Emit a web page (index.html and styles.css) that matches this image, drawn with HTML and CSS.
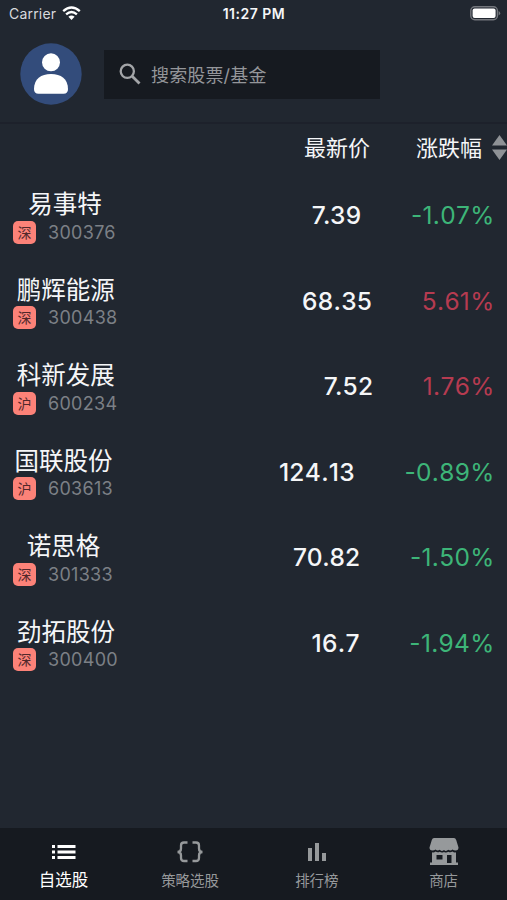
FILE: index.html
```html
<!DOCTYPE html>
<html lang="zh-CN">
<head>
<meta charset="utf-8">
<title>自选股</title>
<link rel="stylesheet" href="styles.css">
</head>
<body>
<div class="app">
  <div class="status">
    <div class="carrier"><span>Carrier</span>
      <svg width="19" height="15" viewBox="0 0 19 15" fill="none" stroke="#fff" stroke-width="2.4"><path d="M1.2 5.2Q9.5-2 17.8 5.2"/><path d="M4.1 8.4Q9.5 3.8 14.9 8.4"/><path d="M6.4 10.8Q9.5 8.3 12.6 10.8L9.5 14Z" fill="#fff" stroke="none"/></svg>
    </div>
    <div class="time">11:27 PM</div>
    <svg class="battery" width="31" height="15" viewBox="0 0 31 15"><rect x=".8" y=".8" width="26.6" height="13" rx="4" fill="none" stroke="#74777d" stroke-width="1.4"/><rect x="2.6" y="2.6" width="23" height="9.4" rx="2" fill="#fff"/><path d="M28.6 5v4.6q1.6-.8 1.6-2.3T28.6 5Z" fill="#74777d"/></svg>
  </div>
  <header class="header">
    <svg class="avatar" width="62" height="62" viewBox="0 0 62 62"><circle cx="31" cy="31" r="30.7" fill="#334c7b"/><circle cx="31" cy="19.300" r="9" fill="#fff"/><path d="M14 46C14 36 21 31 31 31s17 5 17 15q0 4.700-4.500 4.700h-25Q14 50.700 14 46Z" fill="#fff"/></svg>
    <div class="search">
      <svg width="22" height="22" viewBox="0 0 22 22" fill="none" stroke="#a3a5a8" stroke-width="2.300"><circle cx="8.300" cy="8.300" r="6.600"/><path d="M13.200 13.200L20.500 20.500" stroke-width="2.800"/></svg>
      <span>搜索股票/基金</span>
    </div>
  </header>
  <div class="columns">
    <span>最新价</span><span>涨跌幅</span>
    <svg width="15" height="26" viewBox="0 0 15 26" fill="#8f9296"><path d="M7.500 0L15 10.500H0Z"/><path d="M0 14.500H15L7.500 25Z"/></svg>
  </div>
  <main class="list">
    <div class="row"><div class="stock"><div class="name">易事特</div><div class="meta"><span class="tag">深</span><span>300376</span></div></div><div class="price kerned">7.39</div><div class="change down">-1.07%</div></div>
    <div class="row"><div class="stock"><div class="name">鹏辉能源</div><div class="meta"><span class="tag">深</span><span>300438</span></div></div><div class="price">68.35</div><div class="change up">5.61%</div></div>
    <div class="row"><div class="stock"><div class="name">科新发展</div><div class="meta"><span class="tag">沪</span><span>600234</span></div></div><div class="price kerned">7.52</div><div class="change up">1.76%</div></div>
    <div class="row"><div class="stock"><div class="name">国联股份</div><div class="meta"><span class="tag">沪</span><span>603613</span></div></div><div class="price">124.13</div><div class="change down">-0.89%</div></div>
    <div class="row"><div class="stock"><div class="name">诺思格</div><div class="meta"><span class="tag">深</span><span>301333</span></div></div><div class="price kerned">70.82</div><div class="change down">-1.50%</div></div>
    <div class="row"><div class="stock"><div class="name">劲拓股份</div><div class="meta"><span class="tag">深</span><span>300400</span></div></div><div class="price">16.7</div><div class="change down">-1.94%</div></div>
  </main>
  <nav class="tabs">
    <div class="tab active"><svg width="32" height="30" viewBox="0 0 32 30" fill="currentColor"><path d="M5 7h3v3H5zM5 12.500h3v3H5zM5 18h3v3H5zM10.500 7H28.500v3H10.500zM10.500 12.500H28.500v3H10.500zM10.500 18H28.500v3H10.500z"/></svg><span>自选股</span></div>
    <div class="tab"><svg width="32" height="30" viewBox="0 0 32 30" fill="none" stroke="currentColor" stroke-width="2.300"><path d="M13.500 4.500H10Q7 4.500 7 7.500v3q0 3.500-3.500 3.500Q7 14 7 17.500v2.500q0 3 3 3h3.500M18.500 4.500H22q3 0 3 3v3q0 3.500 3.500 3.500Q25 14 25 17.500v2.500q0 3-3 3h-3.500"/></svg><span>策略选股</span></div>
    <div class="tab"><svg width="32" height="30" viewBox="0 0 32 30" fill="currentColor"><path d="M7 10h4v13H7zM14 5h4v18h-4zM21 15h4v8h-4z"/></svg><span>排行榜</span></div>
    <div class="tab"><svg width="32" height="30" viewBox="0 0 32 30" fill="currentColor"><path d="M6 0H26Q27.500 0 28.200 2L30.500 9.500Q30.500 12.500 27.700 12.500Q25.500 12.500 24.500 11.500Q22.500 13.500 20.300 11.800Q18 14 16 12Q13.500 14 11.700 11.800Q9.500 13.500 7.500 11.500Q6.500 12.500 4.300 12.500Q1.500 12.500 1.500 9.500L3.800 2Q4.500 0 6 0Z"/><path fill-rule="evenodd" d="M4 14.200q2 .6 3.500-.7q2 1.500 4.200.3q2 1.500 4.300.2q2.300 1.300 4.300-.2q2.200 1.200 4.200-.3q1.500 1.300 3.500.7V24.500h2V27H2v-2.500h2ZM8.500 17v4.500h6V17ZM19 17v8h4.500v-8Z"/></svg><span>商店</span></div>
  </nav>
</div>
</body>
</html>
```
FILE: styles.css
```css
* { box-sizing: border-box; }
body { margin: 0; background: #212730; color: #f5f6f8; font-family: Inter, "Noto Sans CJK SC", sans-serif; }
svg { display: block; flex: none; }
.app { width: 507px; height: 900px; display: flex; flex-direction: column; overflow: hidden; white-space: nowrap; }
.status { height: 27px; flex: none; display: grid; grid-template-columns: 1fr auto 1fr; align-items: center; padding: 0 6px 0 9px; }
.carrier { display: flex; align-items: center; gap: 6px; font-size: 14px; letter-spacing: .2px; color: #d8dadd; }
.time { font-size: 14px; font-weight: 600; letter-spacing: .5px; margin-right: 2px; }
.battery { justify-self: end; }
.header { height: 97px; flex: none; display: flex; align-items: center; gap: 22px; padding: 0 0 1px 20px; border-bottom: 2px solid #1d212b; }
.search { width: 276px; height: 49px; background: #161a20; display: flex; align-items: center; gap: 10px; padding-left: 15px; color: #94969a; font-size: 18px; letter-spacing: .15px; }
.columns { height: 50px; flex: none; display: flex; align-items: center; justify-content: flex-end; font-size: 22px; padding-bottom: 4px; }
.columns span { margin-top: -2px; }
.columns span + span { margin: -2px 10px 0 46px; }
.columns svg { margin-top: 2px; }
.list { flex: 1; padding-top: 13px; }
.row { height: 85.600px; display: flex; align-items: flex-start; padding: 0 13px; }
.stock { display: flex; flex-direction: column; align-items: center; margin-right: auto; }
.name { font-size: 24.500px; line-height: 34px; padding-left: 1px; }
.meta { display: flex; align-items: center; gap: 12px; height: 22px; font-size: 18px; letter-spacing: .3px; color: #7c8086; }
.tag { width: 23px; height: 23px; border-radius: 5px; background: #fc8278; color: #51282b; font-size: 14px; line-height: 23px; text-align: center; letter-spacing: 0; }
.price, .change { font-size: 24.500px; line-height: 30px; margin-top: 13px; letter-spacing: .3px; font-kerning: none; }
.price { font-weight: 500; }
.price.kerned { font-kerning: normal; }
.change { margin-left: 49.500px; margin-right: -.5px; }
.up { color: #b63b50; }
.down { color: #3db578; }
.tabs { height: 72px; flex: none; display: flex; background: #161a20; color: #96999b; padding-top: 10px; }
.tab { flex: 1; display: flex; flex-direction: column; align-items: center; font-size: 14.500px; line-height: 24px; gap: 1px; }
.active { color: #fff; font-size: 16.500px; line-height: 22px; }
```
